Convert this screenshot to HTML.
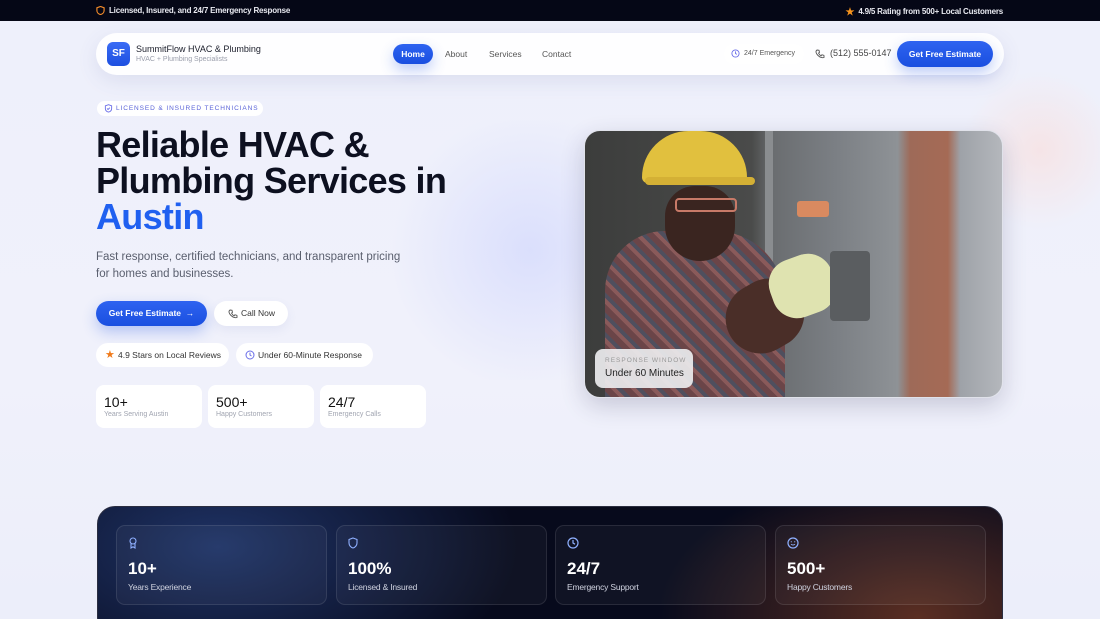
<!DOCTYPE html>
<html><head><meta charset="utf-8"><style>
*{margin:0;padding:0;box-sizing:border-box}
html,body{width:1100px;height:619px;overflow:hidden}
body{font-family:"Liberation Sans",sans-serif;background:linear-gradient(180deg,#eef0fb 0%,#f0f1fb 60%,#eceefa 100%);position:relative;color:#0e1220;white-space:nowrap}
.abs{position:absolute}
.top{left:0;top:0;width:1100px;height:21px;background:#050716;color:#e8e9f0;font-size:8px;font-weight:bold;letter-spacing:-.2px}
.nav{left:96px;top:33px;width:908px;height:42px;background:rgba(255,255,255,.9);border-radius:21px;box-shadow:0 6px 20px rgba(80,90,160,.12)}
.logo{left:11px;top:9px;width:23px;height:24px;border-radius:6px;background:linear-gradient(#3a6cf5,#1d4fe0);color:#fff;font-size:10px;font-weight:bold;text-align:center;line-height:24px}
.btn{background:linear-gradient(#2e63f0,#1a4fe0);color:#fff;font-weight:bold;border-radius:16px;text-align:center;box-shadow:0 6px 14px rgba(40,90,230,.3)}
.pill{background:#fff;border-radius:12px;font-size:8.5px;color:#333}
.stat{background:#fff;border-radius:8px;width:106px;height:43px;top:385px}
.stat b{position:absolute;left:8px;top:9px;font-size:14px;font-weight:normal;color:#111}
.stat span{position:absolute;left:8px;top:26px;font-size:7px;color:#a0a4b0}
.dark{left:97px;top:506px;width:906px;height:130px;border-radius:18px;background:radial-gradient(ellipse 300px 160px at 120px 40px,#1f3366,transparent),radial-gradient(ellipse 260px 150px at 820px 110px,#5a2e22,transparent),#070a1c;border:1px solid #2a2d40}
.card{top:18px;width:211px;height:80px;border-radius:9px;background:rgba(255,255,255,.04);border:1px solid rgba(255,255,255,.1)}
.card b{position:absolute;left:11px;top:33px;font-size:17px;color:#fff}
.card span{position:absolute;left:11px;top:56px;font-size:8.5px;color:#d0d3e0;letter-spacing:-.2px}
.card svg{position:absolute;left:11px;top:11px}
</style></head><body>
<div class="abs" style="left:380px;top:120px;width:300px;height:260px;background:radial-gradient(circle,rgba(180,190,255,.35),transparent 70%)"></div>
<div class="abs" style="left:960px;top:70px;width:160px;height:160px;background:radial-gradient(circle,rgba(255,210,200,.4),transparent 70%)"></div>
<div class="abs top">
 <svg class="abs" style="left:96px;top:6px" width="9" height="9" viewBox="0 0 10 10"><path d="M5 .5L9 2v3c0 2.3-1.8 4-4 4.5C2.8 9 1 7.3 1 5V2z" fill="none" stroke="#f08a2a" stroke-width="1.3"/></svg>
 <span class="abs" style="left:109px;top:6px">Licensed, Insured, and 24/7 Emergency Response</span>
 <span class="abs" style="right:97px;top:6px"><span style="color:#f7941d;font-size:10px;margin-right:4px;position:relative;top:1px">★</span>4.9/5 Rating from 500+ Local Customers</span>
</div>
<div class="abs nav">
 <div class="abs logo">SF</div>
 <div class="abs" style="left:40px;top:11px;font-size:9px;color:#1a1d2a">SummitFlow HVAC &amp; Plumbing</div>
 <div class="abs" style="left:40px;top:23px;font-size:7px;color:#9a9eab">HVAC + Plumbing Specialists</div>
 <div class="abs btn" style="left:297px;top:11px;width:40px;height:20px;font-size:8.5px;line-height:20px;border-radius:10px">Home</div>
 <div class="abs" style="left:349px;top:16px;font-size:8.5px;color:#555">About</div>
 <div class="abs" style="left:393px;top:16px;font-size:8.5px;color:#555">Services</div>
 <div class="abs" style="left:446px;top:16px;font-size:8.5px;color:#555">Contact</div>
 <div class="abs" style="left:628px;top:11px;width:80px;height:20px;background:#fff;border-radius:10px;font-size:7px;color:#555;line-height:20px;padding-left:20px">24/7 Emergency</div>
 <svg class="abs" style="left:635px;top:16px" width="9" height="9" viewBox="0 0 10 10"><circle cx="5" cy="5" r="4" fill="none" stroke="#6a6ee8" stroke-width="1"/><path d="M5 2.6V5l1.5 1" stroke="#6a6ee8" fill="none" stroke-width="1"/></svg>
 <svg class="abs" style="left:719px;top:16px" width="10" height="10" viewBox="0 0 10 10"><path d="M2 1l2 .3.5 2-1 .8c.6 1.3 1.5 2.2 2.6 2.7l.8-1 2 .5.2 2C8.5 9 5.5 9 3 6.5S.5 2 2 1z" fill="none" stroke="#555" stroke-width=".9"/></svg>
 <div class="abs" style="left:734px;top:15px;font-size:9px;color:#444">(512) 555-0147</div>
 <div class="abs btn" style="left:801px;top:8px;width:96px;height:26px;font-size:8.5px;line-height:26px;border-radius:13px">Get Free Estimate</div>
</div>
<div class="abs pill" style="left:97px;top:101px;width:166px;height:15px;border-radius:8px;font-size:6.5px;color:#5a63d8;letter-spacing:.9px;line-height:15px;padding-left:19px">LICENSED &amp; INSURED TECHNICIANS</div>
<svg class="abs" style="left:104px;top:104px" width="9" height="9" viewBox="0 0 10 10"><path d="M5 .8L8.5 2v3c0 2-1.5 3.5-3.5 4C3 8.5 1.5 7 1.5 5V2z" fill="none" stroke="#6a6ee8" stroke-width="1"/><path d="M3.4 5l1.1 1.1 2-2" fill="none" stroke="#6a6ee8" stroke-width="1"/></svg>
<div class="abs" style="left:96px;top:127px;font-size:36px;font-weight:bold;line-height:36px;letter-spacing:-.7px;color:#0d1020">Reliable HVAC &amp;<br>Plumbing Services in<br><span style="color:#2060f0">Austin</span></div>
<div class="abs" style="left:96px;top:249px;width:320px;font-size:11.5px;line-height:17px;color:#5a5f6e;white-space:normal">Fast response, certified technicians, and transparent pricing for homes and businesses.</div>
<div class="abs btn" style="left:96px;top:301px;width:111px;height:25px;font-size:8.5px;line-height:25px;border-radius:13px">Get Free Estimate &nbsp;→</div>
<div class="abs pill" style="left:214px;top:301px;width:74px;height:25px;border-radius:13px;line-height:25px;padding-left:27px;box-shadow:0 4px 10px rgba(80,90,160,.08)">Call Now</div>
<svg class="abs" style="left:228px;top:309px" width="10" height="10" viewBox="0 0 10 10"><path d="M2 1l2 .3.5 2-1 .8c.6 1.3 1.5 2.2 2.6 2.7l.8-1 2 .5.2 2C8.5 9 5.5 9 3 6.5S.5 2 2 1z" fill="none" stroke="#555" stroke-width=".9"/></svg>
<div class="abs pill" style="left:96px;top:343px;width:133px;height:24px;line-height:24px;padding-left:22px"><span style="position:absolute;left:9px;color:#f07a1a;font-size:11px">★</span>4.9 Stars on Local Reviews</div>
<div class="abs pill" style="left:236px;top:343px;width:137px;height:24px;line-height:24px;padding-left:22px">Under 60-Minute Response</div>
<svg class="abs" style="left:245px;top:350px" width="10" height="10" viewBox="0 0 10 10"><circle cx="5" cy="5" r="4" fill="none" stroke="#6a6ee8" stroke-width="1"/><path d="M5 2.6V5l1.5 1" stroke="#6a6ee8" fill="none" stroke-width="1"/></svg>
<div class="abs stat" style="left:96px"><b>10+</b><span>Years Serving Austin</span></div>
<div class="abs stat" style="left:208px"><b>500+</b><span>Happy Customers</span></div>
<div class="abs stat" style="left:320px"><b>24/7</b><span>Emergency Calls</span></div>

<div class="abs" style="left:584px;top:130px;width:419px;height:268px;border-radius:16px;overflow:hidden;background:linear-gradient(90deg,#3c3d3c 0%,#4a4b4a 40%,#6a6d70 45%,#7b7f84 60%,#8e9296 75%,#9e6a58 78%,#a56a55 87%,#9ea2a8 90%,#b4b7bc 100%);box-shadow:0 8px 24px rgba(40,40,80,.2);border:1px solid #e0e2ea">
 <div class="abs" style="left:180px;top:0;width:8px;height:268px;background:#8a8d90"></div>
 <div class="abs" style="left:20px;top:100px;width:180px;height:180px;border-radius:60px 70px 0 0;background:repeating-linear-gradient(45deg,#6b4548 0 6px,#8a5a5a 6px 10px,#4f4f5e 10px 14px)"></div>
 <div class="abs" style="left:80px;top:55px;width:70px;height:75px;border-radius:30px 30px 35px 35px;background:#3a2520"></div>
 <div class="abs" style="left:140px;top:150px;width:80px;height:70px;border-radius:40px;background:#4a2e28;transform:rotate(-30deg)"></div>
 <div class="abs" style="left:57px;top:0;width:105px;height:52px;border-radius:50px 50px 6px 6px;background:#e1c03e"></div>
 <div class="abs" style="left:60px;top:46px;width:110px;height:8px;border-radius:4px;background:#d4b035"></div>
 <div class="abs" style="left:90px;top:67px;width:62px;height:14px;border:2px solid #c87a68;border-radius:4px"></div>
 <div class="abs" style="left:185px;top:125px;width:65px;height:60px;border-radius:25px;background:#dfe3b0;transform:rotate(-20deg)"></div>
 <div class="abs" style="left:245px;top:120px;width:40px;height:70px;background:#5a5d60;border-radius:4px"></div>
 <div class="abs" style="left:212px;top:70px;width:32px;height:16px;background:#d98a60;border-radius:3px"></div>
 <div class="abs" style="left:10px;top:218px;width:98px;height:39px;border-radius:8px;background:rgba(235,235,238,.92)">
  <div class="abs" style="left:10px;top:8px;font-size:6.5px;letter-spacing:1px;color:#999">RESPONSE WINDOW</div>
  <div class="abs" style="left:10px;top:19px;font-size:10px;color:#222">Under 60 Minutes</div>
 </div>
</div>

<div class="abs dark">
 <div class="abs card" style="left:18px"><svg width="10" height="12" viewBox="0 0 10 12"><circle cx="5" cy="4" r="3" fill="none" stroke="#8fb0ff" stroke-width="1.1"/><path d="M3 6.5V11l2-1.2L7 11V6.5" fill="none" stroke="#8fb0ff" stroke-width="1.1"/></svg><b>10+</b><span>Years Experience</span></div>
 <div class="abs card" style="left:238px"><svg width="10" height="12" viewBox="0 0 10 12"><path d="M5 1L9 2.5v3.5c0 2.5-2 4.5-4 5C3 10.5 1 8.5 1 6V2.5z" fill="none" stroke="#8fb0ff" stroke-width="1.1"/></svg><b>100%</b><span>Licensed &amp; Insured</span></div>
 <div class="abs card" style="left:457px"><svg width="12" height="12" viewBox="0 0 12 12"><circle cx="6" cy="6" r="5" fill="none" stroke="#8fb0ff" stroke-width="1.2"/><path d="M6 3v3l2 1.2" fill="none" stroke="#8fb0ff" stroke-width="1.2"/></svg><b>24/7</b><span>Emergency Support</span></div>
 <div class="abs card" style="left:677px"><svg width="12" height="12" viewBox="0 0 12 12"><circle cx="6" cy="6" r="5" fill="none" stroke="#8fb0ff" stroke-width="1.2"/><path d="M4 7.2c1 1 3 1 4 0" fill="none" stroke="#8fb0ff" stroke-width="1"/><circle cx="4.3" cy="4.8" r=".6" fill="#8fb0ff"/><circle cx="7.7" cy="4.8" r=".6" fill="#8fb0ff"/></svg><b>500+</b><span>Happy Customers</span></div>
</div>
</body></html>
